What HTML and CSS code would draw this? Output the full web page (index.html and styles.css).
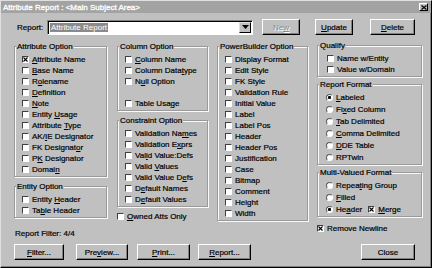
FILE: index.html
```html
<!DOCTYPE html>
<html lang="en">
<head>
    <meta charset="UTF-8">
    <title>Attribute Report</title>
    <link rel="stylesheet" href="styles.css">
</head>
<body>
<div class="window">
    <div class="titlebar">
        <span class="title">Attribute Report : &lt;Main Subject Area&gt;</span>
        <span class="close-x"><svg width="6" height="5" viewBox="0 0 6 5"><path d="M0.5 0.5L5.5 4.5M5.5 0.5L0.5 4.5" stroke="#000" stroke-width="1.2"/></svg></span>
    </div>
    <div class="content">
        <div class="toprow">
            <span class="report-label">Report:</span>
            <div class="combo">
                <span class="combo-text"><span class="selected">Attribute Report</span></span>
                <span class="combo-arrow"><svg width="7" height="4" viewBox="0 0 7 4"><path d="M0 0H7L3.5 4Z" fill="#000"/></svg></span>
            </div>
            <button class="btn btn-new" disabled>Ne<u>w</u></button>
            <button class="btn btn-update"><u>U</u>pdate</button>
            <button class="btn btn-delete"><u>D</u>elete</button>
        </div>

        <div class="body">
            <div class="left">
                <div class="cols">
                    <div class="col col1">
                        <div class="group">
                            <div class="group-title">Attribute Option</div>
                            <div class="items">
                                <div class="check"><span class="box on"><svg width="5" height="5" viewBox="0 0 5 5"><path d="M0.5 0.5L4.5 4.5M4.5 0.5L0.5 4.5" stroke="#000" stroke-width="1.1"/></svg></span><span><u>A</u>ttribute Name</span></div>
                                <div class="check"><span class="box"></span><span><u>B</u>ase Name</span></div>
                                <div class="check"><span class="box"></span><span>R<u>o</u>lename</span></div>
                                <div class="check"><span class="box"></span><span><u>D</u>efinition</span></div>
                                <div class="check"><span class="box"></span><span><u>N</u>ote</span></div>
                                <div class="check"><span class="box"></span><span>Entity <u>U</u>sage</span></div>
                                <div class="check"><span class="box"></span><span>Attribute <u>T</u>ype</span></div>
                                <div class="check"><span class="box"></span><span>AK/<u>I</u>E Designator</span></div>
                                <div class="check"><span class="box"></span><span>FK Designat<u>o</u>r</span></div>
                                <div class="check"><span class="box"></span><span>P<u>K</u> Designator</span></div>
                                <div class="check"><span class="box"></span><span>Domai<u>n</u></span></div>
                            </div>
                        </div>
                        <div class="group group-gap">
                            <div class="group-title">Entity Option</div>
                            <div class="items">
                                <div class="check"><span class="box"></span><span>Entity <u>H</u>eader</span></div>
                                <div class="check"><span class="box"></span><span>Ta<u>b</u>le Header</span></div>
                            </div>
                        </div>
                    </div>

                    <div class="col col2">
                        <div class="group">
                            <div class="group-title">Column Option</div>
                            <div class="items">
                                <div class="check"><span class="box"></span><span><u>C</u>olumn Name</span></div>
                                <div class="check"><span class="box"></span><span>Column Data<u>t</u>ype</span></div>
                                <div class="check"><span class="box"></span><span>N<u>u</u>ll Option</span></div>
                                <div class="check blank"></div>
                                <div class="check"><span class="box"></span><span>Table Usa<u>g</u>e</span></div>
                            </div>
                        </div>
                        <div class="group group-gap">
                            <div class="group-title">Constraint Option</div>
                            <div class="items">
                                <div class="check"><span class="box"></span><span>Validation Na<u>m</u>es</span></div>
                                <div class="check"><span class="box"></span><span>Validation E<u>x</u>prs</span></div>
                                <div class="check"><span class="box"></span><span>Val<u>i</u>d Value:Defs</span></div>
                                <div class="check"><span class="box"></span><span>Valid <u>V</u>alues</span></div>
                                <div class="check"><span class="box"></span><span>Valid Value D<u>e</u>fs</span></div>
                                <div class="check"><span class="box"></span><span>D<u>e</u>fault Names</span></div>
                                <div class="check"><span class="box"></span><span>D<u>e</u>fault Values</span></div>
                            </div>
                        </div>
                        <div class="check loose"><span class="box"></span><span><u>O</u>wned Atts Only</span></div>
                    </div>

                    <div class="col col3">
                        <div class="group">
                            <div class="group-title">PowerBuilder Option</div>
                            <div class="items">
                                <div class="check"><span class="box"></span><span>Display Format</span></div>
                                <div class="check"><span class="box"></span><span>Edit Style</span></div>
                                <div class="check"><span class="box"></span><span>FK Style</span></div>
                                <div class="check"><span class="box"></span><span>Validation Rule</span></div>
                                <div class="check"><span class="box"></span><span>Initial Value</span></div>
                                <div class="check"><span class="box"></span><span>Label</span></div>
                                <div class="check"><span class="box"></span><span>Label Pos</span></div>
                                <div class="check"><span class="box"></span><span>Header</span></div>
                                <div class="check"><span class="box"></span><span>Header Pos</span></div>
                                <div class="check"><span class="box"></span><span>Justification</span></div>
                                <div class="check"><span class="box"></span><span>Case</span></div>
                                <div class="check"><span class="box"></span><span>Bitmap</span></div>
                                <div class="check"><span class="box"></span><span>Comment</span></div>
                                <div class="check"><span class="box"></span><span>Height</span></div>
                                <div class="check"><span class="box"></span><span>Width</span></div>
                            </div>
                        </div>
                    </div>
                </div>

                <div class="filter-label">Report Filter: 4/4</div>
                <div class="btnrow">
                    <button class="btn btn-filter"><u>F</u>ilter...</button>
                    <button class="btn btn-preview">Pre<u>v</u>iew...</button>
                    <button class="btn btn-print"><u>P</u>rint...</button>
                    <button class="btn btn-report"><u>R</u>eport...</button>
                </div>
            </div>

            <div class="right">
                <div class="group group-first">
                    <div class="group-title">Qualify</div>
                    <div class="items">
                        <div class="check"><span class="box"></span><span>Name w/Entity</span></div>
                        <div class="check"><span class="box"></span><span>Value w/Domain</span></div>
                    </div>
                </div>
                <div class="group group-mid">
                    <div class="group-title">Report Format</div>
                    <div class="items radios">
                        <div class="radio"><span class="dot on"></span><span><u>L</u>abeled</span></div>
                        <div class="radio"><span class="dot"></span><span>Fi<u>x</u>ed Column</span></div>
                        <div class="radio"><span class="dot"></span><span><u>T</u>ab Delimited</span></div>
                        <div class="radio"><span class="dot"></span><span><u>C</u>omma Delimited</span></div>
                        <div class="radio"><span class="dot"></span><span><u>D</u>DE Table</span></div>
                        <div class="radio"><span class="dot"></span><span>RPTwin</span></div>
                    </div>
                </div>
                <div class="group group-mid">
                    <div class="group-title">Multi-Valued Format</div>
                    <div class="items radios">
                        <div class="radio"><span class="dot"></span><span>Repea<u>t</u>ing Group</span></div>
                        <div class="radio"><span class="dot"></span><span><u>F</u>illed</span></div>
                        <div class="radio"><span class="dot on"></span><span>He<u>a</u>der</span><span class="box on merge"><svg width="5" height="5" viewBox="0 0 5 5"><path d="M0.5 0.5L4.5 4.5M4.5 0.5L0.5 4.5" stroke="#000" stroke-width="1.1"/></svg></span><span><u>M</u>erge</span></div>
                    </div>
                </div>
                <div class="check newline"><span class="box on"><svg width="5" height="5" viewBox="0 0 5 5"><path d="M0.5 0.5L4.5 4.5M4.5 0.5L0.5 4.5" stroke="#000" stroke-width="1.1"/></svg></span><span>Remove Newline</span></div>
                <button class="btn btn-close">Close</button>
            </div>
        </div>
    </div>
</div>
</body>
</html>
```

FILE: styles.css
```css
body {
    margin: 0;
    background-color: #c0c0c0;
    font-family: "Liberation Sans", Arial, sans-serif;
    font-size: 8px;
    color: #000;
    -webkit-text-stroke: 0.2px #000;
}
.window {
    width: 432px;
    height: 268px;
    box-sizing: border-box;
    background-color: #c0c0c0;
    border: 1px solid;
    border-color: #dfdfdf #000 #000 #dfdfdf;
    box-shadow: inset -1px -1px 0 #808080;
}
.titlebar {
    height: 12px;
    background-color: #a3a3a3;
    display: flex;
    align-items: center;
    padding: 0 3px 0 2px;
}
.title {
    color: #fff;
    -webkit-text-stroke: 0.3px #fff;
    flex: 1;
}
.close-x {
    width: 9px;
    height: 8px;
    box-sizing: border-box;
    background-color: #c0c0c0;
    border: 1px solid;
    border-color: #fff #000 #000 #fff;
    display: flex;
    align-items: center;
    justify-content: center;
}
.content {
    padding: 0 9px 0 13px;
}
.toprow {
    display: flex;
    align-items: center;
    height: 16px;
    margin-top: 6px;
    padding-left: 3px;
}
.report-label {
    width: 30px;
}
.combo {
    width: 206px;
    height: 15px;
    box-sizing: border-box;
    background-color: #fff;
    border: 1px solid;
    border-color: #808080 #fff #fff #808080;
    box-shadow: inset 1px 1px 0 #000;
    display: flex;
    align-items: center;
    padding: 1px 1px 1px 2px;
}
.combo-text {
    flex: 1;
}
.selected {
    background-color: #8a8a8a;
    color: #fff;
    -webkit-text-stroke: 0;
    padding: 0 1px;
}
.combo-arrow {
    width: 12px;
    height: 11px;
    box-sizing: border-box;
    background-color: #c0c0c0;
    border: 1px solid;
    border-color: #dfdfdf #000 #000 #dfdfdf;
    display: flex;
    align-items: center;
    justify-content: center;
}
.btn {
    height: 16px;
    padding: 0;
    box-sizing: border-box;
    background-color: #c0c0c0;
    font-family: inherit;
    font-size: 8px;
    color: #000;
    border: 1px solid;
    border-color: #fff #000 #000 #fff;
    box-shadow: inset -1px -1px 0 #808080;
}
.btn:disabled {
    color: #8a8a8a;
    -webkit-text-stroke: 0;
    text-shadow: 1px 1px 0 #fff;
}
.btn-new {
    width: 38px;
    margin-left: 9px;
}
.btn-update {
    width: 38px;
    margin-left: 15px;
}
.btn-delete {
    width: 45px;
    margin-left: 17px;
}
.body {
    display: flex;
    gap: 9px;
    margin-top: 6px;
}
.cols {
    display: flex;
    gap: 9px;
}
.col1 {
    width: 93px;
    margin-right: 1px;
}
.col2,
.col3 {
    width: 91px;
}
.right {
    width: 105px;
    display: flex;
    flex-direction: column;
}
.group {
    margin-top: 5px;
    border: 1px solid #9a9a9a;
    box-shadow: inset 1px 1px 0 #fafafa, 1px 1px 0 #fafafa;
    padding: 0 0 1px 7px;
}
.group-gap {
    margin-top: 9px;
}
.group-first {
    margin-top: 4px;
}
.group-mid {
    margin-top: 7px;
}
.right .group {
    padding-left: 9px;
}
.group-title {
    width: fit-content;
    margin: -6px 0 0 -6px;
    padding: 0 1px;
    line-height: 11px;
    background-color: #c0c0c0;
}
.right .group-title {
    margin-left: -8px;
}
.items {
    margin-top: 2px;
}
.items.radios {
    margin-top: 1px;
}
.check,
.radio {
    display: flex;
    align-items: center;
    height: 11px;
    white-space: nowrap;
}
.radio {
    height: 12px;
}
.box {
    width: 7px;
    height: 7px;
    box-sizing: border-box;
    flex-shrink: 0;
    margin-right: 3px;
    background-color: #fff;
    border: 1px solid;
    border-color: #404040 #fff #fff #404040;
    display: flex;
    align-items: center;
    justify-content: center;
}
.box svg {
    display: block;
}
.box.merge {
    margin-left: 6px;
}
.dot {
    width: 7px;
    height: 7px;
    box-sizing: border-box;
    flex-shrink: 0;
    margin: 0 3px 0 -1px;
    border-radius: 50%;
    background-color: #fff;
    border: 1px solid;
    border-color: #5a5a5a #fff #fff #5a5a5a;
}
.dot.on {
    background: radial-gradient(circle, #000 1.3px, #fff 1.8px);
}
.check.loose {
    margin-top: 4px;
}
.check.newline {
    margin-top: 6px;
}
.filter-label {
    line-height: 11px;
    margin: 6px 0 0 1px;
}
.btnrow {
    display: flex;
    margin-top: 5px;
}
.btn-filter {
    width: 50px;
}
.btn-preview {
    width: 52px;
    margin-left: 12px;
}
.btn-print {
    width: 53px;
    margin-left: 9px;
}
.btn-report {
    width: 53px;
    margin-left: 8px;
}
.btn-close {
    width: 54px;
    margin: 10px 7px 0 auto;
}
```
